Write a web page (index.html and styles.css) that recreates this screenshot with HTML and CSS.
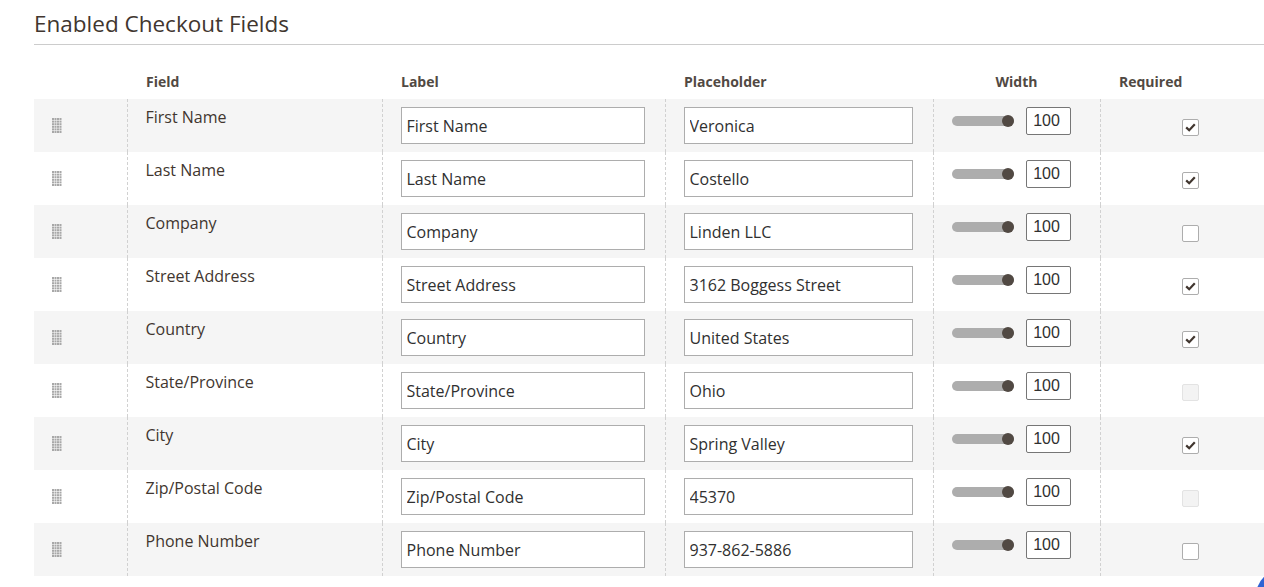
FILE: index.html
```html
<!DOCTYPE html>
<html lang="en">
<head>
    <meta charset="UTF-8">
    <meta name="viewport" content="width=device-width, initial-scale=1.0">
    <title>Enabled Checkout Fields</title>
    <link rel="stylesheet" href="styles.css">
</head>
<body>
    <div class="container">
        <h1 class="section-title">Enabled Checkout Fields</h1>

        <table class="fields-table">
            <colgroup>
                <col class="col-drag">
                <col class="col-field">
                <col class="col-label">
                <col class="col-placeholder">
                <col class="col-width">
                <col class="col-required">
            </colgroup>
            <thead>
                <tr>
                    <th></th>
                    <th>Field</th>
                    <th>Label</th>
                    <th>Placeholder</th>
                    <th class="th-center">Width</th>
                    <th>Required</th>
                </tr>
            </thead>
            <tbody id="fields-body"></tbody>
        </table>
    </div>

    <div class="corner-button"></div>

    <script>
        // Campos do checkout
        const fields = [
            { name: 'First Name', placeholder: 'Veronica', required: 'checked' },
            { name: 'Last Name', placeholder: 'Costello', required: 'checked' },
            { name: 'Company', placeholder: 'Linden LLC', required: 'off' },
            { name: 'Street Address', placeholder: '3162 Boggess Street', required: 'checked' },
            { name: 'Country', placeholder: 'United States', required: 'checked' },
            { name: 'State/Province', placeholder: 'Ohio', required: 'disabled' },
            { name: 'City', placeholder: 'Spring Valley', required: 'checked' },
            { name: 'Zip/Postal Code', placeholder: '45370', required: 'disabled' },
            { name: 'Phone Number', placeholder: '937-862-5886', required: 'off' }
        ];

        // Ícone de arrastar (grade de pontos)
        function dragIcon() {
            let dots = '';
            for (let r = 0; r < 6; r++) {
                for (let c = 0; c < 4; c++) {
                    dots += `<rect x="${c * 2.5}" y="${r * 2.6}" width="2" height="2"/>`;
                }
            }
            return `<svg class="drag-handle" width="10" height="15" viewBox="0 0 10 15" fill="#a8a8a8">${dots}</svg>`;
        }

        const checkSvg = '<svg width="11" height="9" viewBox="0 0 11 9"><path d="M1.2 4.4 L4.2 7.3 L9.8 1.3" fill="none" stroke="#41362f" stroke-width="2.2"/></svg>';

        const body = document.getElementById('fields-body');
        body.innerHTML = fields.map(f => `
            <tr>
                <td class="cell-drag">${dragIcon()}</td>
                <td class="cell-field">${f.name}</td>
                <td class="cell-input"><input class="text-input" type="text" value="${f.name}"></td>
                <td class="cell-input"><input class="text-input" type="text" value="${f.placeholder}"></td>
                <td class="cell-width">
                    <div class="width-control">
                        <span class="slider"><span class="slider-thumb"></span></span>
                        <span class="number-input">100</span>
                    </div>
                </td>
                <td class="cell-required">
                    <span class="checkbox ${f.required}">${f.required === 'checked' ? checkSvg : ''}</span>
                </td>
            </tr>
        `).join('');
    </script>
</body>
</html>
```

FILE: styles.css
```css
body {
    font-family: "Open Sans", sans-serif;
    margin: 0;
    background-color: #fff;
    color: #303030;
    overflow: hidden;
}
.container {
    padding-left: 34px;
    width: 1246px;
}
.section-title {
    margin: 0;
    padding: 9px 0 6px;
    font-size: 22.5px;
    line-height: 29px;
    font-weight: 400;
    color: #41362f;
    border-bottom: 1px solid #cccccc;
}
.fields-table {
    margin-top: 18px;
    width: 1246px;
    table-layout: fixed;
    border-collapse: collapse;
}
.col-drag { width: 93px; }
.col-field { width: 255px; }
.col-label { width: 283px; }
.col-placeholder { width: 268px; }
.col-width { width: 167px; }
.col-required { width: 180px; }

.fields-table th {
    height: 36px;
    padding: 0 0 0 19px;
    text-align: left;
    font-size: 14px;
    font-weight: 700;
    color: #514943;
    vertical-align: middle;
}
.fields-table th.th-center {
    text-align: center;
    padding-left: 0;
}
.fields-table tbody tr:nth-child(odd) {
    background-color: #f5f5f5;
}
.fields-table td {
    height: 53px;
    padding: 0;
    border-left: 1px dashed #d1d1d1;
    box-sizing: border-box;
}
.fields-table td:first-child {
    border-left: none;
}
.cell-drag {
    padding-left: 18px !important;
    vertical-align: middle;
}
.drag-handle {
    display: block;
    margin-top: -1px;
}
.cell-field {
    vertical-align: top;
    padding: 7px 0 0 18px !important;
    font-size: 16px;
    line-height: 22px;
    color: #41362f;
}
.cell-input {
    padding: 0 20px 0 18px !important;
    vertical-align: middle;
}
.text-input {
    display: block;
    width: 100%;
    height: 37px;
    box-sizing: border-box;
    border: 1px solid #adadad;
    padding: 0 5px;
    font-family: "Open Sans", sans-serif;
    font-size: 16px;
    color: #303030;
    background: #fff;
}
.cell-width {
    vertical-align: top;
    padding: 8px 0 0 18px !important;
}
.width-control {
    display: flex;
    align-items: center;
    gap: 12px;
}
.slider {
    position: relative;
    display: block;
    width: 62px;
    height: 10px;
    border-radius: 5px;
    background-color: #adadad;
}
.slider-thumb {
    position: absolute;
    right: 0;
    top: -1px;
    width: 12px;
    height: 12px;
    border-radius: 50%;
    background-color: #514943;
}
.number-input {
    display: flex;
    align-items: center;
    justify-content: center;
    width: 45px;
    height: 28px;
    box-sizing: border-box;
    border: 1px solid #767676;
    border-radius: 2px;
    font-family: "Liberation Sans", Arial, sans-serif;
    font-size: 16px;
    color: #303030;
    background: #fff;
    padding-right: 3px;
}
.cell-required {
    text-align: center;
    vertical-align: middle;
}
.checkbox {
    display: inline-flex;
    align-items: center;
    justify-content: center;
    width: 17px;
    height: 17px;
    box-sizing: border-box;
    border: 1px solid #adadad;
    border-radius: 2px;
    background: #fff;
    vertical-align: middle;
    margin-top: 1px;
}
.checkbox.disabled {
    background: #f3f3f3;
    border-color: #e3e3e3;
}
.corner-button {
    position: fixed;
    right: -61px;
    bottom: -48px;
    width: 70px;
    height: 70px;
    border-radius: 50%;
    background-color: #2f63d4;
}
```
